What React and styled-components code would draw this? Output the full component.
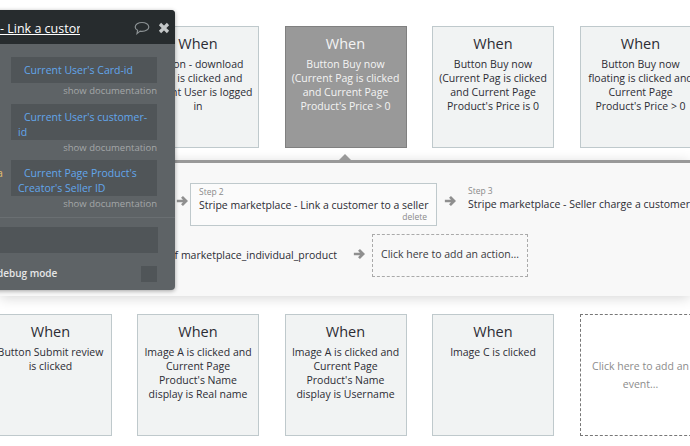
import React from 'react';
import styled, { createGlobalStyle } from 'styled-components';

const GlobalStyle = createGlobalStyle`
    html, body {
        margin: 0;
        padding: 0;
        background: #fff;
        overflow: hidden;
    }
    body {
        font-family: "Open Sans", "Liberation Sans", sans-serif;
    }
`;

const Page = styled.div`
    position: relative;
    width: 690px;
    height: 446px;
    overflow: hidden;
`;

const EventRow = styled.div`
    display: flex;
    gap: 25.5px;
    margin-left: -10.5px;
    padding-top: ${props => props.$top}px;
`;

const EventCard = styled.div`
    flex: 0 0 122px;
    box-sizing: border-box;
    height: 122px;
    padding: 7px 2px 0;
    text-align: center;
    background: ${props => props.$active ? '#999999' : '#f1f3f3'};
    border: 1px solid ${props => props.$active ? '#808080' : '#bfc9cc'};
    color: ${props => props.$active ? '#f4f4f4' : '#2c2c34'};
`;

const AddEvent = styled.div`
    flex: 0 0 122px;
    box-sizing: border-box;
    height: 122px;
    border: 1px dashed #777;
    display: flex;
    align-items: center;
    justify-content: center;
    text-align: center;
    color: #8c8c8c;
    font-size: 10.5px;
    line-height: 18px;
    padding: 0 4px;
`;

const CardTitle = styled.div`
    font-size: 14.5px;
    line-height: 20px;
    margin-bottom: 3px;
`;

const CardText = styled.div`
    font-size: 10.5px;
    line-height: 14px;
    white-space: pre-line;
`;

const Workflow = styled.div`
    position: relative;
    margin-top: 12px;
    height: 136px;
    box-sizing: border-box;
    background: #f8f8f8;
    border-top: 3px solid #999;
    box-shadow: 0 2px 12px rgba(0, 0, 0, 0.16);
    padding-top: 20px;
    &::before {
        content: '';
        position: absolute;
        left: 339px;
        top: -9px;
        border-left: 6px solid transparent;
        border-right: 6px solid transparent;
        border-bottom: 6px solid #999;
    }
`;

const StepRow = styled.div`
    display: flex;
    align-items: flex-start;
    white-space: nowrap;
    margin-left: 10px;
`;

const StepBox = styled.div`
    position: relative;
    flex: 0 0 ${props => props.$width}px;
    min-width: 0;
    box-sizing: border-box;
    height: 43px;
    padding: 2px 8px 0;
    ${props => props.$bordered && 'border: 1px solid #bfc9cc; background: #fbfbfb;'}
`;

const StepLabel = styled.div`
    font-size: 8.5px;
    line-height: 12px;
    color: #8a8a8a;
`;

const StepName = styled.div`
    font-size: 10.5px;
    line-height: 14px;
    color: #2c2c34;
`;

const DeleteLink = styled.div`
    position: absolute;
    right: 9px;
    bottom: 2px;
    font-size: 8.5px;
    line-height: 12px;
    color: #8a8a8a;
`;

const ArrowSlot = styled.div`
    flex: 0 0 ${props => props.$width}px;
    box-sizing: border-box;
    display: flex;
    justify-content: center;
    padding-top: ${props => props.$top}px;
    padding-left: ${props => props.$left}px;
`;

const ConditionRow = styled.div`
    display: flex;
    align-items: flex-start;
    margin-top: 8px;
`;

const ConditionText = styled.div`
    flex: 0 0 337px;
    box-sizing: border-box;
    padding-top: 14px;
    text-align: right;
    white-space: nowrap;
    font-size: 10.5px;
    line-height: 14px;
    color: #2c2c34;
`;

const AddAction = styled.div`
    flex: 0 0 156px;
    box-sizing: border-box;
    height: 43px;
    border: 1px dashed #aaa;
    padding-top: 11px;
    text-align: center;
    font-size: 10.5px;
    line-height: 16px;
    color: #3a3a40;
`;

const Inspector = styled.div`
    position: absolute;
    left: -10px;
    top: 10px;
    width: 185px;
    height: 280px;
    background: #5e6366;
    border-radius: 4px;
    box-shadow: 0 1px 4px rgba(0, 0, 0, 0.35);
    overflow: hidden;
`;

const InspectorHead = styled.div`
    display: flex;
    align-items: center;
    box-sizing: border-box;
    height: 34px;
    background: #272c2e;
    padding: 2px 5px 0 0;
`;

const InspectorTitle = styled.div`
    flex: 0 0 90px;
    overflow: hidden;
    white-space: nowrap;
    font-size: 12.5px;
    color: #fff;
    text-decoration: underline;
    padding-left: 10px;
    box-sizing: border-box;
`;

const HeadIcons = styled.div`
    margin-left: auto;
    display: flex;
    align-items: center;
    gap: 8px;
`;

const InspectorBody = styled.div`
    position: relative;
    padding: 13px 18px 0 21px;
`;

const Field = styled.div`
    box-sizing: border-box;
    min-height: 26px;
    background: #505558;
    padding: 6px 6px 0 7px;
    text-indent: 6px;
    font-size: 10.5px;
    line-height: 15px;
    color: #62a6ec;
`;

const DocLink = styled.div`
    height: 20.5px;
    text-align: right;
    font-size: 9.5px;
    line-height: 16px;
    color: #a4a7a8;
`;

const ParamMark = styled.span`
    position: absolute;
    left: 7px;
    top: 122px;
    font-size: 10.5px;
    line-height: 14px;
    color: #e8c070;
`;

const Divider = styled.div`
    height: 1px;
    background: #6a6f72;
    margin: 0 -18px 9px -21px;
`;

const WideField = styled.div`
    height: 26px;
    background: #505558;
    margin: 0 -1px 0 -21px;
`;

const DebugRow = styled.div`
    display: flex;
    align-items: center;
    justify-content: space-between;
    margin-top: 13px;
    margin-left: -21px;
    font-size: 10px;
    font-weight: 600;
    color: #e6e6e6;
`;

const DebugText = styled.div`
    margin-left: 7px;
    padding-bottom: 2px;
`;

const DebugCheck = styled.div`
    width: 16px;
    height: 16px;
    background: #505558;
`;

const topEvents = [
    { text: 'Button - download\nnow is clicked and\nCurrent User is logged\nin' },
    { text: 'Button Buy now\n(Current Pag is clicked\nand Current Page\nProduct\'s Price > 0', active: true },
    { text: 'Button Buy now\n(Current Pag is clicked\nand Current Page\nProduct\'s Price is 0' },
    { text: 'Button Buy now\nfloating is clicked and\nCurrent Page\nProduct\'s Price > 0' },
];

const bottomEvents = [
    'Button Submit review\nis clicked',
    'Image A is clicked and\nCurrent Page\nProduct\'s Name\ndisplay is Real name',
    'Image A is clicked and\nCurrent Page\nProduct\'s Name\ndisplay is Username',
    'Image C is clicked',
];

const StepArrow = () => (
    <svg width="12" height="12" viewBox="0 0 14 14">
        <path d="M1 7h10M7 2.200L11.800 7 7 11.800" fill="none" stroke="#8f8f8f" strokeWidth="3.2" />
    </svg>
);

const App = () => {
    return (
        <Page>
            <GlobalStyle />
            <EventRow $top={26}>
                <EventCard>
                    <CardTitle>When</CardTitle>
                    <CardText>Button Add to cart is clicked</CardText>
                </EventCard>
                {topEvents.map((item, i) => (
                    <EventCard key={i} $active={item.active}>
                        <CardTitle>When</CardTitle>
                        <CardText>{item.text}</CardText>
                    </EventCard>
                ))}
            </EventRow>
            <Workflow>
                <StepRow>
                    <StepBox $bordered $width={155}>
                        <StepLabel>Step 1</StepLabel>
                        <StepName>Make changes</StepName>
                    </StepBox>
                    <ArrowSlot $width={25} $top={12} $left={8}><StepArrow /></ArrowSlot>
                    <StepBox $bordered $width={247}>
                        <StepLabel>Step 2</StepLabel>
                        <StepName>Stripe marketplace - Link a customer to a seller</StepName>
                        <DeleteLink>delete</DeleteLink>
                    </StepBox>
                    <ArrowSlot $width={23} $top={12} $left={2}><StepArrow /></ArrowSlot>
                    <StepBox $width={240}>
                        <StepLabel>Step 3</StepLabel>
                        <StepName>Stripe marketplace - Seller charge a customer</StepName>
                    </StepBox>
                </StepRow>
                <ConditionRow>
                    <ConditionText>Current Page's type of marketplace_individual_product</ConditionText>
                    <ArrowSlot $width={35} $top={14} $left={8}><StepArrow /></ArrowSlot>
                    <AddAction>Click here to add an action...</AddAction>
                </ConditionRow>
            </Workflow>
            <EventRow $top={18}>
                {bottomEvents.map((text, i) => (
                    <EventCard key={i}>
                        <CardTitle>When</CardTitle>
                        <CardText>{text}</CardText>
                    </EventCard>
                ))}
                <AddEvent>Click here to add an event...</AddEvent>
            </EventRow>
            <Inspector>
                <InspectorHead>
                    <InspectorTitle>- Link a custor</InspectorTitle>
                    <HeadIcons>
                        <svg width="16" height="14" viewBox="0 0 16 14">
                            <path d="M8 1.500c3.800 0 6.800 2 6.800 4.400S11.800 10.300 8 10.300c-.7 0-1.300 0-1.900-.2L3 12.600l.6-3.300C2 8.500 1.200 7.300 1.200 5.900 1.200 3.500 4.200 1.500 8 1.500z" fill="none" stroke="#8a9092" strokeWidth="1.2" />
                        </svg>
                        <svg width="12" height="12" viewBox="0 0 12 12">
                            <path d="M2 2l8 8M10 2l-8 8" fill="none" stroke="#c4c8c9" strokeWidth="3.2" />
                        </svg>
                    </HeadIcons>
                </InspectorHead>
                <InspectorBody>
                    <ParamMark>a</ParamMark>
                    <Field>Current User's Card-id</Field>
                    <DocLink>show documentation</DocLink>
                    <Field>Current User's customer-id</Field>
                    <DocLink>show documentation</DocLink>
                    <Field>Current Page Product's Creator's Seller ID</Field>
                    <DocLink>show documentation</DocLink>
                    <Divider />
                    <WideField />
                    <DebugRow>
                        <DebugText>debug mode</DebugText>
                        <DebugCheck />
                    </DebugRow>
                </InspectorBody>
            </Inspector>
        </Page>
    );
};

export default App;
